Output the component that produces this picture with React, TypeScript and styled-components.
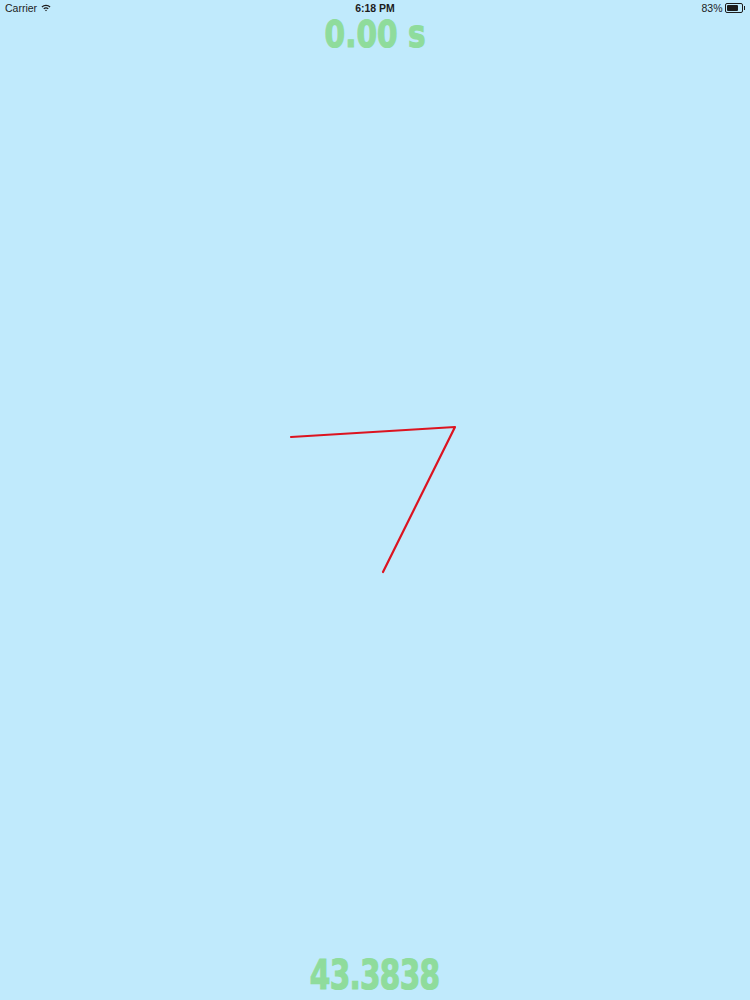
import React from 'react';
import styled, { createGlobalStyle } from 'styled-components';

const GlobalStyle = createGlobalStyle`
  html, body {
    margin: 0;
    padding: 0;
    background: #c0eafc;
  }
`;

const Page = styled.div`
  position: relative;
  width: 750px;
  height: 1000px;
  background: #c0eafc;
  display: flex;
  flex-direction: column;
  overflow: hidden;
`;

const StatusBar = styled.div`
  height: 16px;
  display: grid;
  grid-template-columns: 1fr auto 1fr;
  align-items: center;
  padding: 0 5px;
  font-family: 'Liberation Sans', Arial, sans-serif;
  font-size: 10.5px;
  color: #1c1c1c;
`;

const Carrier = styled.div`
  display: flex;
  align-items: center;
  gap: 4px;
`;

const Clock = styled.div`
  font-weight: bold;
`;

const Battery = styled.div`
  display: flex;
  align-items: center;
  justify-content: flex-end;
  gap: 2px;
`;

const BatteryBody = styled.div`
  width: 14px;
  height: 6px;
  border: 1px solid #1c1c1c;
  border-radius: 2px;
  padding: 1px;
  display: flex;
`;

const BatteryLevel = styled.div`
  background: #1c1c1c;
  border-radius: 1px;
`;

const BatteryTip = styled.div`
  width: 1.5px;
  height: 4px;
  background: #1c1c1c;
  margin-left: -1px;
`;

const CounterRow = styled.div`
  display: flex;
  justify-content: center;
`;

const Counter = styled.span<{ $size: number; $tight?: number; $squeeze: number }>`
  display: inline-block;
  font-family: 'DejaVu Sans', sans-serif;
  font-weight: bold;
  font-size: ${(p) => p.$size}px;
  letter-spacing: ${(p) => p.$tight ?? 0}px;
  color: #8fdc9c;
  -webkit-text-stroke: 1.2px #8fdc9c;
  line-height: 1;
  white-space: nowrap;
  transform: scaleX(${(p) => p.$squeeze});
`;

const Canvas = styled.div`
  flex: 1;
`;

const Footer = styled(CounterRow)`
  padding-bottom: 5px;
`;

const Drawing = styled.svg`
  position: absolute;
  inset: 0;
  pointer-events: none;
`;

const stroke = [
  [291, 437],
  [455, 427],
  [383, 572],
];

const App = () => (
  <>
    <GlobalStyle />
    <Page>
      <StatusBar>
        <Carrier>
          Carrier
          <svg width="10" height="8" viewBox="0 0 10 8">
            <path d="M0.5 2.6 A6.5 6.5 0 0 1 9.5 2.6 L8.6 3.5 A5.2 5.2 0 0 0 1.4 3.5 Z" fill="#1c1c1c" />
            <path d="M2.3 4.4 A4 4 0 0 1 7.7 4.4 L6.8 5.3 A2.7 2.7 0 0 0 3.2 5.3 Z" fill="#1c1c1c" />
            <path d="M4 6.2 A1.5 1.5 0 0 1 6 6.2 L5 7.3 Z" fill="#1c1c1c" />
          </svg>
        </Carrier>
        <Clock>6:18 PM</Clock>
        <Battery>
          83%
          <BatteryBody>
            <BatteryLevel style={{ width: '83%' }} />
          </BatteryBody>
          <BatteryTip />
        </Battery>
      </StatusBar>
      <CounterRow>
        <Counter $size={37} $squeeze={0.8}>0.00 s</Counter>
      </CounterRow>
      <Canvas />
      <Footer>
        <Counter $size={40} $tight={-1} $squeeze={0.74}>43.3838</Counter>
      </Footer>
      <Drawing width="750" height="1000" viewBox="0 0 750 1000">
        <polyline
          points={stroke.map((p) => p.join(',')).join(' ')}
          fill="none"
          stroke="#dc1420"
          strokeWidth="2.2"
          strokeLinejoin="round"
          strokeLinecap="round"
        />
      </Drawing>
    </Page>
  </>
);

export default App;
